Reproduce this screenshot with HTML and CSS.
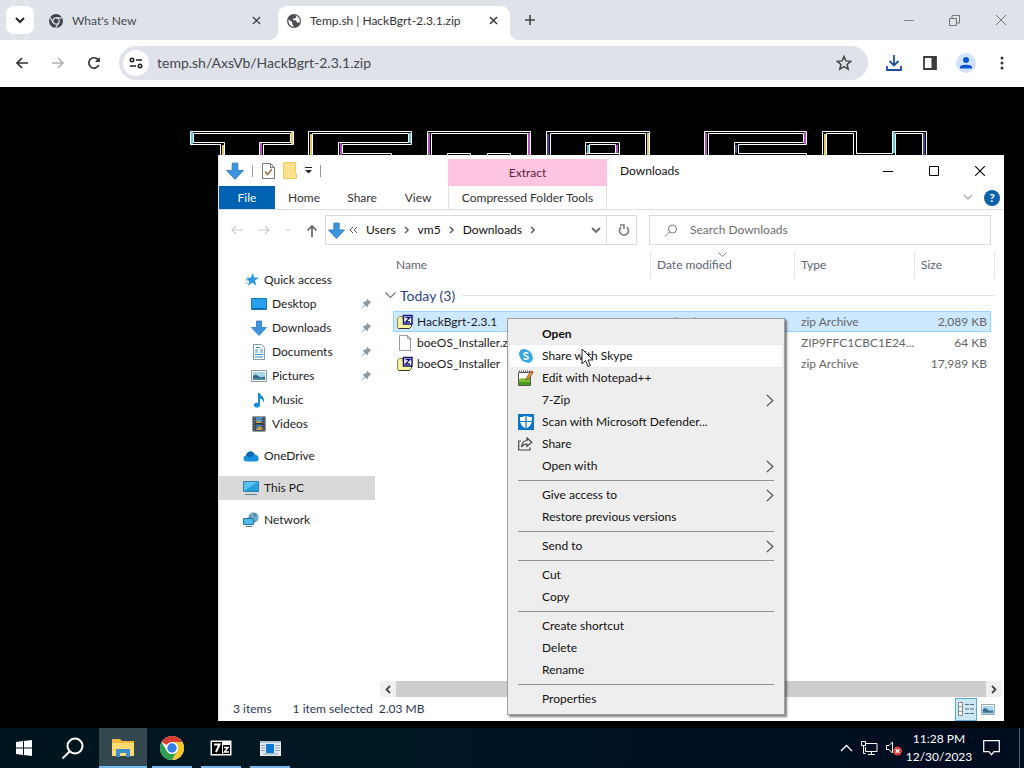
FILE: index.html
```html
<!DOCTYPE html>
<html lang="en">
<head>
<meta charset="utf-8">
<title>Temp.sh | HackBgrt-2.3.1.zip</title>
<link rel="stylesheet" href="styles.css">
</head>
<body>
<svg class="defs" aria-hidden="true">
  <symbol id="down-arrow" viewBox="0 0 16 16"><path d="M5.5 1h5v6.500H15.500L8 15.500.5 7.500h5z" fill="#3b96e0" stroke="#2b78c0" stroke-width=".8"/></symbol>
  <symbol id="pin" viewBox="0 0 12 12"><path d="M7.200.8 11.200 4.800 9.800 5.200 8 7.200 7.800 9.600 5.400 7.400 1 11 4.600 6.600 2.400 4.200 4.800 4 6.800 2.200z" fill="#8d979f"/></symbol>
  <symbol id="zip" viewBox="0 0 16 16"><path d="M.5 4.500 2.500 2.500H6V14.500H1.500L.5 13.500z" fill="#f4f09a" stroke="#8b8740"/><path d="M2 14.500h10.500l2-2V10H6V5H2z" fill="#f7f59c"/><path d="M1.500 14.500h11l2-2V10" fill="none" stroke="#333"/><path d="M6.500 1.500h8.500v8.500H6.500z" fill="#fff" stroke="#15157a" stroke-width="1.500"/><path d="M8.500 3.500h4.500L8.500 8H13" fill="none" stroke="#15157a" stroke-width="1.300"/></symbol>
  <symbol id="sub" viewBox="0 0 8 13"><path d="m.8.800 6 5.700-6 5.700" fill="none" stroke="#444" stroke-width="1.100"/></symbol>
  <symbol id="crumb" viewBox="0 0 6 8"><path d="m1 1 3.200 3L1 7" fill="none" stroke="#555" stroke-width="1.300"/></symbol>
  <symbol id="close" viewBox="0 0 10 10"><path d="m1 1 8 8M9 1 1 9" fill="none" stroke="currentColor" stroke-width="1.600"/></symbol>
  <symbol id="picture" viewBox="0 0 16 12"><path d="M.5.500h15v11H.5z" fill="#fff" stroke="#8c979e"/><path d="M2 2h12v8H2z" fill="#a7d6ee"/><path d="M2 6c3-3 5 0 7 1s4-1 5 0v3H2z" fill="#356b86"/><path d="M2 8.500h12V10H2z" fill="#4d91b5"/></symbol>
</svg>

<div class="desktop">
  <section class="browser" aria-label="Browser">
    <div class="tabstrip">
      <button class="tab-search" aria-label="Search tabs"><svg width="10" height="7" viewBox="0 0 10 7"><path d="m1 1 4 4 4-4" fill="none" stroke="#222" stroke-width="2"/></svg></button>
      <div class="tab">
        <svg width="14" height="14" viewBox="0 0 14 14"><circle cx="7" cy="7" r="7" fill="#42464c"/><circle cx="7" cy="7" r="3.200" fill="none" stroke="#dfe2e8" stroke-width="1.200"/><path d="M7 3.800h6.500M4.200 8.600 1 3.200M9.800 8.600 6.600 14" stroke="#dfe2e8" stroke-width="1.200"/></svg>
        <a class="tab-title" href="#">What's New</a>
        <button class="icon-button" aria-label="Close tab"><svg width="9" height="9"><use href="#close"/></svg></button>
      </div>
      <div class="tab tab-active">
        <svg width="14" height="14" viewBox="0 0 14 14"><circle cx="7" cy="7" r="7" fill="#4d5156"/><path d="M1.500 5.500 5 8l.5 2.500L7 12.700C3.500 12.700 1 9.500 1.500 5.500zM6.500 1.500h2.800L9 4 6.500 4.500 6 6l3 .5 1 2h2.700C13.500 4 10.500 1 6.500 1.500z" fill="#fff"/></svg>
        <a class="tab-title" href="#">Temp.sh | HackBgrt-2.3.1.zip</a>
        <button class="icon-button" aria-label="Close tab"><svg width="9" height="9"><use href="#close"/></svg></button>
      </div>
      <button class="icon-button new-tab" aria-label="New tab"><svg width="12" height="12" viewBox="0 0 12 12"><path d="M6 1v10M1 6h10" stroke="#444" stroke-width="1.600"/></svg></button>
      <div class="browser-controls">
        <button class="icon-button" aria-label="Minimize"><svg width="10" height="10"><path d="M0 5.500h10" stroke="#888"/></svg></button>
        <button class="icon-button" aria-label="Restore"><svg width="11" height="11"><path d="M.5 3.500h7v7h-7zM3 3V.5h7.500V8H8" fill="none" stroke="#777"/></svg></button>
        <button class="icon-button" aria-label="Close"><svg width="12" height="12"><path d="m1 1 10 10M11 1 1 11" stroke="#777"/></svg></button>
      </div>
    </div>
    <div class="toolbar">
      <button class="icon-button" aria-label="Back"><svg width="14" height="12" viewBox="0 0 14 12"><path d="M13 6H2M7 1 2 6l5 5" fill="none" stroke="#333" stroke-width="1.700"/></svg></button>
      <button class="icon-button" aria-label="Forward"><svg width="14" height="12" viewBox="0 0 14 12"><path d="M1 6h11M7 1l5 5-5 5" fill="none" stroke="#b0b0b0" stroke-width="1.500"/></svg></button>
      <button class="icon-button" aria-label="Reload"><svg width="14" height="14" viewBox="0 0 14 14"><path d="M11.800 9A5.200 5.200 0 1 1 11 3.600L12 5" fill="none" stroke="#333" stroke-width="1.700"/><path d="M12.800 1v5H8z" fill="#333"/></svg></button>
      <div class="omnibox">
        <button class="site-info" aria-label="Site information"><svg width="14" height="12" viewBox="0 0 14 12"><g fill="none" stroke="#222" stroke-width="1.600"><circle cx="3" cy="3" r="1.700"/><path d="M7 3h6M1 9h6"/><circle cx="11" cy="9" r="1.700"/></g></svg></button>
        <input type="text" aria-label="Address" value="temp.sh/AxsVb/HackBgrt-2.3.1.zip">
        <button class="icon-button" aria-label="Bookmark"><svg width="16" height="16" viewBox="0 0 16 16"><path d="m8 1.500 1.900 4.400 4.800.4-3.600 3.200 1.100 4.700L8 11.700l-4.200 2.500 1.100-4.700L1.300 6.300l4.800-.4z" fill="none" stroke="#444" stroke-width="1.500"/></svg></button>
      </div>
      <div class="toolbar-actions">
        <button class="icon-button" aria-label="Downloads"><svg width="16" height="16" viewBox="0 0 16 16"><path d="M8 0v10M3.500 6 8 10.500 12.500 6M1 11v4h14v-4" fill="none" stroke="#1d4d9c" stroke-width="1.800"/></svg></button>
        <button class="icon-button" aria-label="Side panel"><svg width="14" height="14" viewBox="0 0 14 14"><path d="M1 1h12v12H1z" fill="none" stroke="#3c3c3f" stroke-width="1.800"/><path d="M8.500 1H13v12H8.500z" fill="#3c3c3f"/></svg></button>
        <button class="icon-button" aria-label="Profile"><svg width="20" height="20" viewBox="0 0 20 20"><circle cx="10" cy="10" r="10" fill="#d2e2fb"/><circle cx="10" cy="7" r="3" fill="#0b57d0"/><path d="M4 15.500V14c0-3 12-3 12 0v1.500z" fill="#0b57d0"/></svg></button>
        <button class="icon-button" aria-label="Menu"><svg width="4" height="14" viewBox="0 0 4 14"><circle cx="2" cy="2" r="1.500" fill="#333"/><circle cx="2" cy="7" r="1.500" fill="#333"/><circle cx="2" cy="12" r="1.500" fill="#333"/></svg></button>
      </div>
    </div>
    <main class="page">
      <svg class="banner" width="740" height="30" viewBox="190 131 740 30" role="img" aria-label="temp.sh">
        <g fill="none" stroke-width="2">
          <path d="M192 132V144M410 133V143M588 145V153M894 132V153" stroke="#55cbd8"/>
          <path d="M223 145V161M292 132V144M311 134V161M648 133V161M825 134V161" stroke="#dfc86a"/>
          <path d="M261 143V161M341 143V161M429 133V161M529 133V161M617 145V153M706 133V161M805 132V144" stroke="#b34fc2"/>
          <path d="M548 134V161M736 145V153M924 133V161" stroke="#4545a8"/>
        </g>
        <g fill="none" stroke="#fff">
          <path d="M220.500 161V144.500H190.500V131.500H293.500V144.500H263.500V161M224.500 161V142.500H193.500V133.500H290.500V142.500H259.500V161"/>
          <path d="M308.500 161V131.500H411.500V144.500H342.500V153.500H391.500V161M312.500 161V133.500H408.500V142.500H338.500V161"/>
          <path d="M427.500 161V131.500H530.500V161M431.500 161V133.500H527.500V161M447.500 161V153.500H470.500V161M450.500 161V155.500H467.500M487.500 161V153.500H510.500V161"/>
          <path d="M546.500 161V131.500H649.500V161M550.500 161V133.500H645.500V161M585.500 161V142.500H619.500V161M589.500 153.500V144.500H615.500V153.500M585.500 153.500H619.500"/>
          <path d="M704.500 161V131.500H806.500V144.500H738.500V153.500H806.500V161M708.500 161V133.500H803.500V142.500H734.500V161"/>
          <path d="M822.500 161V131.500H856.500V153.500H892.500V131.500H926.500V161M826.500 161V133.500H853.500V161M895.500 161V133.500H922.500V161"/>
        </g>
      </svg>
    </main>
  </section>

  <section class="explorer" aria-label="Downloads">
    <header class="ribbon">
      <div class="quick-tools">
        <svg width="18" height="18"><use href="#down-arrow"/></svg>
        <span class="tool-divider"></span>
        <button class="icon-button" aria-label="Properties"><svg width="13" height="16" viewBox="0 0 13 16"><path d="M.5.500h8l4 4v11H.5z" fill="#fff" stroke="#777"/><path d="M8.500.500v4h4" fill="none" stroke="#777"/><path d="m3 8.500 2.500 3L10 6" fill="none" stroke="#a5693f" stroke-width="1.500"/></svg></button>
        <button class="icon-button" aria-label="New folder"><svg width="14" height="17" viewBox="0 0 14 17"><path d="M.5.500h12v10l1 1v5H.5z" fill="#fbe08c" stroke="#ecc85f"/></svg></button>
        <button class="icon-button" aria-label="Customize toolbar"><svg width="7" height="7"><path d="M0 .5h7" stroke="#222"/><path d="M0 3h7L3.500 6.500z" fill="#222"/></svg></button>
        <span class="tool-divider"></span>
      </div>
      <div class="context-title">Extract</div>
      <div class="title-area">
        <h1>Downloads</h1>
        <div class="window-controls">
          <button class="icon-button" aria-label="Minimize"><svg width="10" height="10"><path d="M0 5.500h10" stroke="#000"/></svg></button>
          <button class="icon-button" aria-label="Maximize"><svg width="10" height="10"><path d="M.5.500h9v9h-9z" fill="none" stroke="#000"/></svg></button>
          <button class="icon-button" aria-label="Close"><svg width="10" height="10"><path d="m0 0 10 10M10 0 0 10" stroke="#000" stroke-width="1.100"/></svg></button>
        </div>
      </div>
      <nav class="ribbon-tabs">
        <button class="ribbon-tab file-tab">File</button>
        <button class="ribbon-tab">Home</button>
        <button class="ribbon-tab">Share</button>
        <button class="ribbon-tab">View</button>
      </nav>
      <button class="ribbon-tab context-tab">Compressed Folder Tools</button>
      <div class="ribbon-end">
        <button class="icon-button" aria-label="Expand ribbon"><svg width="10" height="7"><path d="m1 1 4 4 4-4" fill="none" stroke="#aaa" stroke-width="1.300"/></svg></button>
        <button class="help" aria-label="Help">?</button>
      </div>
    </header>

    <div class="location-bar">
      <div class="history">
        <button class="icon-button" aria-label="Back"><svg width="12" height="10"><path d="M12 5H1M5 1 1 5l4 4" fill="none" stroke="#ccc" stroke-width="1.200"/></svg></button>
        <button class="icon-button" aria-label="Forward"><svg width="12" height="10"><path d="M0 5h11M7 1l4 4-4 4" fill="none" stroke="#ccc" stroke-width="1.200"/></svg></button>
        <button class="icon-button" aria-label="Recent"><svg width="6" height="4"><path d="m1 1 2 2 2-2" fill="none" stroke="#ccc"/></svg></button>
        <button class="icon-button" aria-label="Up"><svg width="12" height="13"><path d="M6 13V2M1.500 6.500 6 2l4.500 4.500" fill="none" stroke="#666" stroke-width="1.700"/></svg></button>
      </div>
      <div class="address">
        <svg width="17" height="17"><use href="#down-arrow"/></svg>
        <svg width="9" height="8"><path d="M4 1 1 4l3 3M8 1 5 4l3 3" fill="none" stroke="#555"/></svg>
        <a href="#">Users</a><svg width="6" height="8"><use href="#crumb"/></svg>
        <a href="#">vm5</a><svg width="6" height="8"><use href="#crumb"/></svg>
        <a href="#">Downloads</a><svg width="6" height="8"><use href="#crumb"/></svg>
        <button class="icon-button history-drop" aria-label="Previous locations"><svg width="10" height="7"><path d="m1 1 4 4 4-4" fill="none" stroke="#666" stroke-width="1.800"/></svg></button>
        <button class="refresh" aria-label="Refresh"><svg width="12" height="13" viewBox="0 0 12 13"><path d="M9 3.200A4.500 4.500 0 1 1 3.200 3" fill="none" stroke="#777" stroke-width="1.600"/><path d="M2 1h4v4" fill="none" stroke="#777" stroke-width="1.500"/></svg></button>
      </div>
      <label class="search">
        <svg width="14" height="13"><circle cx="8.500" cy="5" r="4" fill="none" stroke="#777"/><path d="m5.500 8-4.500 4.500" stroke="#777"/></svg>
        <input type="search" placeholder="Search Downloads" aria-label="Search Downloads">
      </label>
    </div>

    <div class="explorer-body">
      <nav class="nav-pane">
        <a class="nav-item" href="#"><svg width="14" height="14" viewBox="0 0 14 14"><path d="m8 0 1 4.500 5 .3-4 2.700 1.300 5.300-4-3.200L3 13l1.300-4.800L1 5.500l4.500-.8z" fill="#2b96dc"/><path d="M0 7h3M0 10h3M2 4h2" stroke="#74bfe9"/></svg><span>Quick access</span></a>
        <a class="nav-item child" href="#"><svg width="16" height="16" viewBox="0 0 16 16"><path d="M.5 2.500h15v11H.5z" fill="#27a1f0" stroke="#1477b8"/><path d="M1 12.500h14" stroke="#126ba6"/></svg><span>Desktop</span><svg class="pin" width="12" height="12"><use href="#pin"/></svg></a>
        <a class="nav-item child" href="#"><svg width="16" height="16"><use href="#down-arrow"/></svg><span>Downloads</span><svg class="pin" width="12" height="12"><use href="#pin"/></svg></a>
        <a class="nav-item child" href="#"><svg width="16" height="16" viewBox="0 0 16 16"><path d="M2.500.500h8l3 3v12h-11z" fill="#fff" stroke="#829ba8"/><path d="M4 6h3M9 6h3M4 8h3M9 8h3M4 10.500h8M4 13h8M5 3.500h4" stroke="#3494c5" stroke-width="1.200"/></svg><span>Documents</span><svg class="pin" width="12" height="12"><use href="#pin"/></svg></a>
        <a class="nav-item child" href="#"><svg width="16" height="12"><use href="#picture"/></svg><span>Pictures</span><svg class="pin" width="12" height="12"><use href="#pin"/></svg></a>
        <a class="nav-item child" href="#"><svg width="16" height="16" viewBox="0 0 16 16"><path d="M7 1h2c0 3 4 3.500 4 7 0 1.500-1 3-1 3 .5-3-1-4-3-4.500V13c0 4-7 3-6-.5.500-1.500 2.500-2.200 4-1.500z" fill="#168ed6"/></svg><span>Music</span></a>
        <a class="nav-item child" href="#"><svg width="16" height="16" viewBox="0 0 16 16"><path d="M1.500.500h13v15h-13z" fill="#333"/><path d="M4.500 1h7v6h-7z" fill="#4b8dc3"/><path d="M4.500 8.500h7v6h-7z" fill="#3b76ad"/><path d="m4.500 7 3-3 4 3M4.500 14l4-4 3 2v2z" fill="#c59b45"/><path d="M3 1.500v14M13 1.500v14" stroke="#ddd" stroke-dasharray="1 1.500"/></svg><span>Videos</span></a>
        <a class="nav-item spaced" href="#"><svg width="16" height="16" viewBox="0 0 16 16"><path d="M3.500 13.500C-.500 13.500-.500 8 3 7.500 4 2.500 10.500 2 11.500 6.500 16 6 17.500 13.500 13 13.500z" fill="#1790df"/><path d="M3 7.500C4 2.500 10.500 2 11.500 6.500L7 9.500z" fill="#0968b5"/></svg><span>OneDrive</span></a>
        <a class="nav-item spaced selected" href="#"><svg width="16" height="16" viewBox="0 0 16 16"><path d="M.5 1.500h15v10H.5z" fill="#55c2f1" stroke="#337fa8"/><path d="m1 11 14-9v9z" fill="#249fd9"/><path d="M2 14.500h12" stroke="#588296"/></svg><span>This PC</span></a>
        <a class="nav-item spaced" href="#"><svg width="16" height="16" viewBox="0 0 16 16"><circle cx="10.500" cy="5.500" r="5" fill="#518bab"/><path d="M7 3c2-4 4-2 3 0l2 2 3-2v5l-5 1z" fill="#73aecb"/><path d="M.5 6.500h10v6H.5z" fill="#4dbbed" stroke="#27749e"/><path d="M3 14.500h6" stroke="#3f7591"/></svg><span>Network</span></a>
      </nav>

      <div class="file-pane">
        <table class="files">
          <colgroup><col class="col-name"><col class="col-date"><col class="col-type"><col class="col-size"><col class="col-end"></colgroup>
          <thead><tr><th>Name</th><th><svg class="sort" width="9" height="5"><path d="m.5.500 4 4 4-4" fill="none" stroke="#888"/></svg>Date modified</th><th>Type</th><th>Size</th><th></th></tr></thead>
          <tbody>
            <tr class="group"><th colspan="5"><button class="group-toggle"><svg width="11" height="7"><path d="m.5.500 5 5 5-5" fill="none" stroke="#777" stroke-width="1.200"/></svg><span>Today (3)</span></button></th></tr>
            <tr class="row-selected"><td><div class="file"><svg width="16" height="16"><use href="#zip"/></svg>HackBgrt-2.3.1</div></td><td>12/30/2023 11:28 PM</td><td>zip Archive</td><td class="size">2,089 KB</td><td></td></tr>
            <tr><td><div class="file"><svg width="16" height="16" viewBox="0 0 16 16"><path d="M2.500.500h8l3 3v12h-11zM10.500.500v3h3" fill="#fff" stroke="#999"/></svg>boeOS_Installer.zip</div></td><td>12/30/2023 11:27 PM</td><td>ZIP9FFC1CBC1E24...</td><td class="size">64 KB</td><td></td></tr>
            <tr><td><div class="file"><svg width="16" height="16"><use href="#zip"/></svg>boeOS_Installer</div></td><td>12/30/2023 11:20 PM</td><td>zip Archive</td><td class="size">17,989 KB</td><td></td></tr>
          </tbody>
        </table>
        <div class="scrollbar">
          <button class="icon-button" aria-label="Scroll left"><svg width="6" height="9"><path d="M5 1 1.500 4.500 5 8" fill="none" stroke="#444" stroke-width="1.800"/></svg></button>
          <div class="thumb"></div>
          <button class="icon-button" aria-label="Scroll right"><svg width="6" height="9"><path d="m1 1 3.500 3.500L1 8" fill="none" stroke="#444" stroke-width="1.800"/></svg></button>
        </div>
      </div>
    </div>

    <footer class="status">
      <span>3 items</span><span class="status-selected">1 item selected</span><span>2.03 MB</span>
      <div class="view-modes">
        <button class="view-button view-active" aria-label="Details view"><svg width="16" height="14" viewBox="0 0 16 14"><path d="M.5.500h4v13h-4zM.5 4.800h4M.5 9.200h4" fill="#fff" stroke="#888"/><path d="M7 2.500h4M12 2.500h4M7 7h4M12 7h4M7 11.500h4M12 11.500h4" stroke="#667"/></svg></button>
        <button class="view-button" aria-label="Large icons"><svg width="14" height="11" viewBox="0 0 16 12" preserveAspectRatio="none"><use href="#picture"/></svg></button>
      </div>
    </footer>
  </section>

  <div class="context-menu" role="menu">
    <button class="menu-item default" role="menuitem"><span class="menu-icon"></span><span>Open</span></button>
    <button class="menu-item hovered" role="menuitem"><span class="menu-icon"><svg width="16" height="16" viewBox="-1 -1 16 16"><circle cx="5" cy="5" r="5" fill="#31a8e4"/><circle cx="9" cy="9" r="5" fill="#3fb5ed"/><circle cx="7" cy="7" r="6" fill="#36a9e5"/><path d="M9.300 4.600C8 3.300 5 3.400 5 5.200 5 7 9.300 6.700 9.300 8.800 9.300 10.600 6 10.800 4.700 9.300" fill="none" stroke="#fff" stroke-width="1.500"/></svg></span><span>Share with Skype</span></button>
    <button class="menu-item" role="menuitem"><span class="menu-icon"><svg width="16" height="16" viewBox="0 0 16 16"><path d="M.5 2.500h12v13H.5z" fill="#fff" stroke="#555"/><path d="M1 9c4-2 7 1 11-2v8H1z" fill="#7ebd33"/><path d="M1 12h11v3H1z" fill="#4c9b21"/><path d="M1 1.500h11" stroke="#666" stroke-width="2" stroke-dasharray="1 1"/><path d="m8 10 1-3 4-6 2 1.500-4 6z" fill="#e89c35" stroke="#69451d" stroke-width=".7"/><path d="m12.500 2 1-1.500L15.500 2l-1 1.500z" fill="#c44232"/></svg></span><span>Edit with Notepad++</span></button>
    <button class="menu-item" role="menuitem"><span class="menu-icon"></span><span>7-Zip</span><svg class="submenu" width="8" height="13"><use href="#sub"/></svg></button>
    <button class="menu-item" role="menuitem"><span class="menu-icon"><svg width="16" height="16" viewBox="0 0 16 16"><path d="M0 0h16v16H0z" fill="#0874c9"/><path d="M8 1.500c2 1.500 4 1.500 6 1.500 0 6-.5 9-6 11.500C2.500 12 2 9 2 3c2 0 4 0 6-1.500z" fill="#fff"/><path d="M8 1v14M1 7.500h14" stroke="#0874c9" stroke-width="1.200"/></svg></span><span>Scan with Microsoft Defender...</span></button>
    <button class="menu-item" role="menuitem"><span class="menu-icon"><svg width="15" height="14" viewBox="0 0 15 14"><path d="M3 4H.700v9H12v-2.500" fill="none" stroke="#444" stroke-width="1.200"/><path d="M9 1v2.500C5.500 3.500 4 6 3.500 10 5 7.500 6.500 7 9 7v2.500L13.800 5.200z" fill="none" stroke="#444" stroke-width="1.200"/></svg></span><span>Share</span></button>
    <button class="menu-item" role="menuitem"><span class="menu-icon"></span><span>Open with</span><svg class="submenu" width="8" height="13"><use href="#sub"/></svg></button>
    <hr>
    <button class="menu-item" role="menuitem"><span class="menu-icon"></span><span>Give access to</span><svg class="submenu" width="8" height="13"><use href="#sub"/></svg></button>
    <button class="menu-item" role="menuitem"><span class="menu-icon"></span><span>Restore previous versions</span></button>
    <hr>
    <button class="menu-item" role="menuitem"><span class="menu-icon"></span><span>Send to</span><svg class="submenu" width="8" height="13"><use href="#sub"/></svg></button>
    <hr>
    <button class="menu-item" role="menuitem"><span class="menu-icon"></span><span>Cut</span></button>
    <button class="menu-item" role="menuitem"><span class="menu-icon"></span><span>Copy</span></button>
    <hr>
    <button class="menu-item" role="menuitem"><span class="menu-icon"></span><span>Create shortcut</span></button>
    <button class="menu-item" role="menuitem"><span class="menu-icon"></span><span>Delete</span></button>
    <button class="menu-item" role="menuitem"><span class="menu-icon"></span><span>Rename</span></button>
    <hr>
    <button class="menu-item" role="menuitem"><span class="menu-icon"></span><span>Properties</span></button>
  </div>
  <svg class="cursor" width="13" height="20" viewBox="0 0 13 20"><path d="M1 1v15l3.500-3.500L7 18.500l2.500-1-2.500-5.500H12z" fill="#fff" stroke="#222"/></svg>

  <footer class="taskbar">
    <button class="task start" aria-label="Start"><svg width="16" height="16" viewBox="0 0 16 16"><path d="m0 2 7-1v6.500H0zM8 .900 16 0v7.500H8zM0 8.500h7V15l-7-1zM8 8.500h8V16l-8-.9z" fill="#fff"/></svg></button>
    <button class="task find" aria-label="Search"><svg width="23" height="23" viewBox="0 0 23 23"><circle cx="14" cy="9" r="7.500" fill="none" stroke="#fff" stroke-width="2"/><path d="m8.500 14.500-7 7" stroke="#fff" stroke-width="2"/></svg></button>
    <button class="task running current" aria-label="File Explorer"><svg width="22" height="18" viewBox="0 0 22 18"><path d="M0 0h8l2 2h12v15H0z" fill="#f4b83e"/><path d="M0 4h22v13H0z" fill="#ffdb70"/><path d="M4 18v-8h14v8h-4v-4H8v4z" fill="#3f8fce"/></svg></button>
    <button class="task running" aria-label="Chrome"><svg width="24" height="24" viewBox="0 0 24 24"><circle cx="12" cy="12" r="12" fill="#fff"/><path d="M12 12 1.600 6A12 12 0 0 1 22.400 6H12z" fill="#dc3b2f"/><path d="M12 6h10.400A12 12 0 0 1 12 24l5.200-9A6 6 0 0 0 12 6z" fill="#f5c72e"/><path d="M1.600 6 6.800 15a6 6 0 0 0 10.400 0L12 24A12 12 0 0 1 1.600 6z" fill="#2d9e4e"/><circle cx="12" cy="12" r="6" fill="#fff"/><circle cx="12" cy="12" r="4.700" fill="#347fe5"/></svg></button>
    <button class="task running" aria-label="7-Zip"><svg width="22" height="16" viewBox="0 0 22 16"><path d="M.5.500h21v15H.5z" fill="#fff"/><path d="M2 2h10v12H2zM13 5h7v9h-7z" fill="#000"/><path d="M4 4.500h5.500L6 12" fill="none" stroke="#fff" stroke-width="2"/><path d="M14 7.500h4L14.500 12H19" fill="none" stroke="#fff" stroke-width="1.500"/></svg></button>
    <button class="task running" aria-label="Installer"><svg width="21" height="15" viewBox="0 0 21 15"><path d="M0 0h21v15H0z" fill="#e4eaf0"/><path d="M0 0h21v2H0z" fill="#aec4d5"/><path d="M6 3h8v9H6z" fill="#0f78d0"/><path d="M1 4.500h4M1 7h4M1 9.500h4M15 4.500h5M15 7h5M15 9.500h5M3 13h15" stroke="#879ead"/></svg></button>
    <div class="tray">
      <button class="icon-button" aria-label="Show hidden icons"><svg width="13" height="8"><path d="m1 7 5.500-5.500L12 7" fill="none" stroke="#fff" stroke-width="1.300"/></svg></button>
      <button class="icon-button" aria-label="Network"><svg width="17" height="14" viewBox="0 0 17 14"><path d="M5 2.500h11v8H4.500V6M7 13.500h7M10.500 10.500v3M.5.500h4v4h-4zM2.500 4.500v8h2" fill="none" stroke="#fff"/></svg></button>
      <button class="icon-button" aria-label="Volume muted"><svg width="16" height="15" viewBox="0 0 16 15"><path d="M.5 4.500H3L6.500 1v11L3 8.500H.5z" fill="none" stroke="#fff"/><circle cx="11.500" cy="10" r="4.500" fill="#d63b3b"/><path d="m9.700 8.200 3.600 3.600M13.300 8.200l-3.600 3.600" stroke="#fff" stroke-width="1.300"/></svg></button>
      <button class="clock"><span>11:28 PM</span><span>12/30/2023</span></button>
      <button class="icon-button notifications" aria-label="Notifications"><svg width="17" height="16" viewBox="0 0 17 16"><path d="M.7.700h15.600v11H11l-2.500 3-2.500-3H.7z" fill="none" stroke="#fff" stroke-width="1.200"/></svg></button>
    </div>
  </footer>
</div>
</body>
</html>
```

FILE: styles.css
```css
* { box-sizing: border-box; }
body { margin: 0; font: 12px/16px Lato, "Open Sans", sans-serif; color: #1b1b1b; background: #000; }
button, input { font: inherit; color: inherit; border: 0; padding: 0; background: transparent; }
input { min-width: 0; outline: 0; }
button { display: flex; align-items: center; justify-content: center; }
a { color: inherit; text-decoration: none; }
svg { display: block; flex: none; }
.defs { display: none; }
.icon-button { flex: none; }

.desktop { position: relative; display: flex; flex-direction: column; min-height: 100vh; overflow: hidden; }

/* Browser */
.browser { flex: 1; display: flex; flex-direction: column; }
.tabstrip { display: flex; align-items: flex-end; height: 40px; padding: 0 0 0 6px; background: #dfe2e8; color: #454a50; }
.tab-search { width: 28px; height: 28px; margin: 0 5px 6px 0; border-radius: 8px; background: #fff; }
.tab { display: flex; align-items: center; gap: 9px; width: 232px; height: 34px; padding: 0 12px 5px 9px; }
.tab:not(.tab-active) { padding: 0 10px 5px 10px; margin-right: 7px; }
.tab-active { position: relative; background: #fff; border-radius: 9px 9px 0 0; color: #333; }
.tab-active::before, .tab-active::after { content: ""; position: absolute; bottom: 0; width: 9px; height: 9px; }
.tab-active::before { right: 100%; background: radial-gradient(circle at 0 0, transparent 9px, #fff 9px); }
.tab-active::after { left: 100%; background: radial-gradient(circle at 100% 0, transparent 9px, #fff 9px); }
.tab-title { flex: 1; white-space: nowrap; }
.new-tab { height: 40px; margin-left: 14px; }
.browser-controls { display: flex; align-items: center; gap: 35px; height: 40px; margin-left: auto; padding-right: 17px; }
.toolbar { display: flex; align-items: center; gap: 22px; height: 47px; padding: 0 12px 1px 15px; background: #fff; }
.omnibox { flex: 1; display: flex; align-items: center; height: 34px; margin-left: -4px; padding: 0 16px 0 4px; gap: 8px; border-radius: 17px; background: #dfe2e8; font-size: 14px; color: #44484f; }
.omnibox input { flex: 1; }
.site-info { width: 26px; height: 26px; border-radius: 50%; background: #fff; }
.toolbar-actions { display: flex; align-items: center; gap: 16px; margin-left: -6px; }
.toolbar-actions button { width: 20px; }
.page { flex: 1; padding: 44px 0 0 190px; background: #000; }

/* File manager window */
.explorer { position: absolute; left: 218px; right: 20px; top: 155px; bottom: 47px; display: flex; flex-direction: column; border-left: 1px solid #e6e6e6; background: #fff; }
.ribbon { display: grid; grid-template-columns: 229px 159px 1fr; grid-template-rows: 31px 23px; border-bottom: 1px solid #dcdcdc; }
.quick-tools { display: flex; align-items: center; gap: 8px; padding-left: 7px; }
.tool-divider { width: 1px; height: 12px; background: #999; }
.tool-divider + .icon-button { margin-left: 1px; }
.context-title { display: flex; align-items: center; justify-content: center; margin-top: 4px; background: #fdc5df; color: #5e2442; }
.title-area { display: flex; align-items: center; justify-content: space-between; padding: 0 19px 0 13px; }
h1 { margin: 0; font: inherit; color: #111; }
.window-controls { display: flex; gap: 36px; }
.ribbon-tabs { display: grid; grid-template-columns: 56px 58px 58px 54px; }
.ribbon-tab { color: #333; white-space: nowrap; }
.file-tab { background: #0063b1; color: #fff; }
.context-tab { border-left: 1px solid #e8dce2; border-right: 1px solid #e8dce2; }
.ribbon-end { display: flex; align-items: center; justify-content: flex-end; gap: 11px; padding-right: 4px; }
.help { width: 16px; height: 16px; border-radius: 50%; background: #0c63ad; color: #fff; font-weight: 700; }

.location-bar { display: grid; grid-template-columns: 94px minmax(0, 312fr) minmax(0, 354fr); align-items: center; height: 40px; padding: 0 13px 0 12px; }
.history { display: flex; align-items: center; justify-content: space-between; margin-right: 7px; }
.address { display: flex; align-items: center; gap: 8px; height: 30px; padding-left: 2px; border: 1px solid #d9d9d9; color: #111; }
.address svg:first-child { margin-right: -4px; }
.history-drop { margin-left: auto; margin-right: 1px; }
.refresh { align-self: stretch; width: 30px; border-left: 1px solid #d9d9d9; }
.search { display: flex; align-items: center; gap: 12px; height: 30px; margin-left: 12px; padding-left: 14px; border: 1px solid #d9d9d9; }
.search input { flex: 1; }
.search input::placeholder { color: #6d6d6d; opacity: 1; }

.explorer-body { flex: 1; display: flex; min-height: 0; }
.nav-pane { width: 156px; padding-top: 18px; margin-right: 5px; }
.nav-item { display: flex; align-items: center; gap: 5px; height: 24px; padding-left: 24px; }
.nav-item:first-child { padding-left: 26px; }
.nav-item.child { padding: 0 3px 0 32px; }
.nav-item.spaced { margin-top: 8px; }
.nav-item.selected { background: #d9d9d9; }
.pin { margin-left: auto; }
.file-pane { flex: 1; display: flex; flex-direction: column; min-width: 0; }
.files { width: calc(100% - 22px); margin-left: 13px; border-collapse: separate; border-spacing: 0; table-layout: fixed; white-space: nowrap; }
.col-name { width: 258px; }
.col-date { width: 144px; }
.col-type { width: 120px; }
.col-end { width: 4px; }
.files th { font-weight: 400; text-align: left; color: #5a6472; }
.files thead th { position: relative; height: 30px; padding: 0 6px; background: linear-gradient(#e4e4e4, #e4e4e4) right 2px / 1px 26px no-repeat; }
.files thead th:first-child { padding-left: 3px; }
.files thead th:nth-child(4) { background: none; }
.files thead th:last-child { padding: 0; }
.sort { position: absolute; left: calc(50% - 5px); top: 2px; }
.files .group th { height: 31px; padding: 0; }
.group-toggle { width: 100%; gap: 4px; margin-left: -8px; font-size: 14px; color: #2b3f85; justify-content: flex-start; }
.group-toggle::after { content: ""; flex: 1; height: 1px; margin: 0 -8px 0 3px; background: #e2e2e2; }
.files td { height: 21px; padding: 0 6px; color: #666; }
.files td:first-child { padding-left: 4px; color: #1b1b1b; }
.files td:last-child { padding: 0; }
.files .size { padding-right: 4px; text-align: right; }
.file { display: flex; align-items: center; gap: 4px; }
.row-selected td:not(:last-child) { background: #cce8ff; border-top: 1px solid #99d1ff; border-bottom: 1px solid #99d1ff; }
.row-selected td:first-child { border-left: 1px solid #99d1ff; padding-left: 3px; }
.row-selected .size { border-right: 1px solid #99d1ff; padding-right: 3px; }
.scrollbar { display: flex; height: 16px; margin: auto 2px 0 0; background: #f0f0f0; }
.scrollbar button { width: 16px; }
.thumb { flex: 1; background: #cdcdcd; }
.status { display: flex; align-items: center; height: 24px; padding: 0 5px 0 14px; color: #2b3852; }
.status-selected { margin: 0 6px 0 21px; }
.view-modes { display: flex; margin-left: auto; }
.view-button { width: 22px; height: 23px; border: 1px solid transparent; }
.view-active { background: #cbe8f6; border-color: #55aed4; }

/* Context menu */
.context-menu { position: absolute; left: 507px; top: 318px; width: 278px; padding: 4px 2px; border: 1px solid #a0a0a0; background: #eee; box-shadow: 2px 2px 2px rgba(0, 0, 0, .5); color: #111; }
.menu-item { width: 100%; height: 22px; padding: 0 8px; justify-content: flex-start; }
.menu-icon { width: 24px; }
.menu-item.default { font-weight: 700; }
.menu-item.hovered { background: #fff; }
.submenu { margin-left: auto; }
.context-menu hr { height: 1px; margin: 3px 8px; border: 0; background: #919191; }
.cursor { position: absolute; left: 581px; top: 348px; }

/* Taskbar */
.taskbar { display: flex; height: 40px; background: linear-gradient(90deg, #00151d, #001824 35%, #000f22 75%, #000c20); color: #fff; }
.task { position: relative; width: 48px; margin-right: 1px; }
.task.start { margin-right: 0; }
.task.find { margin-right: 3px; }
.running::after { content: ""; position: absolute; bottom: 0; left: 4px; right: 4px; height: 2px; background: #76b9ed; }
.current { background: #33484f; }
.current::after { left: 0; right: 0; }
.tray { display: flex; align-items: center; margin-left: auto; gap: 8px; padding-right: 4px; }
.clock { flex-direction: column; width: 58px; line-height: 18px; }
.notifications { align-self: stretch; padding: 0 19px 0 7px; border-right: 1px solid #555f6b; }
```
